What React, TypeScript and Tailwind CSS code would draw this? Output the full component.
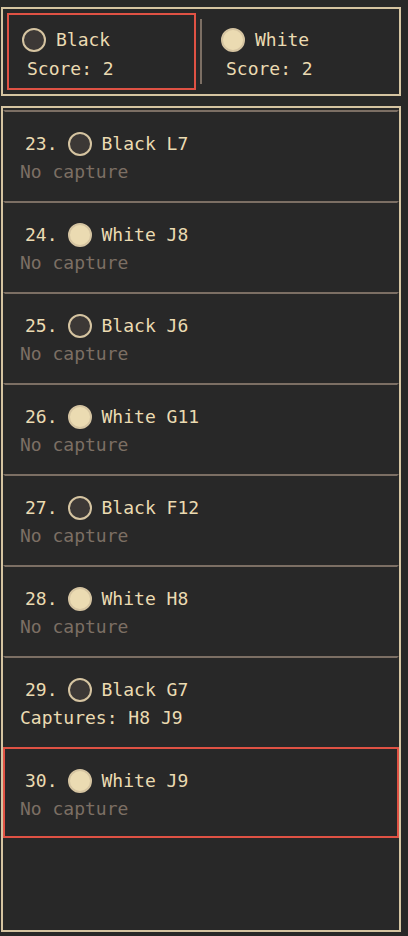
type Player = "Black" | "White";

interface Move {
  number: number;
  player: Player;
  point: string;
  captures: string[];
}

const MOVES: Move[] = [
  { number: 23, player: "Black", point: "L7", captures: [] },
  { number: 24, player: "White", point: "J8", captures: [] },
  { number: 25, player: "Black", point: "J6", captures: [] },
  { number: 26, player: "White", point: "G11", captures: [] },
  { number: 27, player: "Black", point: "F12", captures: [] },
  { number: 28, player: "White", point: "H8", captures: [] },
  { number: 29, player: "Black", point: "G7", captures: ["H8", "J9"] },
  { number: 30, player: "White", point: "J9", captures: [] },
];

const CURRENT_MOVE = 30;

function Stone({ player }: { player: Player }) {
  const fill = player === "Black" ? "bg-[#3c3836]" : "bg-[#ebdbb2]";
  return <span className={`size-6 shrink-0 rounded-full border-2 border-[#d5c4a1] ${fill}`} />;
}

function PlayerCard({ player, score, active }: { player: Player; score: number; active: boolean }) {
  return (
    <div
      className={`flex flex-1 flex-col gap-px border-2 pt-[11px] pb-[5px] ${
        active ? "border-[#e05244]" : "border-transparent"
      }`}
    >
      <div className="flex items-center gap-2.5 pl-[13px]">
        <Stone player={player} />
        <span>{player}</span>
      </div>
      <p className="pl-[18px]">Score: {score}</p>
    </div>
  );
}

function MoveRow({ move, current }: { move: Move; current: boolean }) {
  const captured = move.captures.length > 0;
  return (
    <li>
      <button
        type="button"
        className={`block w-full border-2 px-[15px] pt-[18px] pb-[13px] text-left ${
          current ? "border-[#e05244]" : "border-transparent border-t-[#7c6f64]"
        }`}
      >
        <span className="flex items-center gap-2.5 pl-[5px]">
          <span>{move.number}.</span>
          <Stone player={move.player} />
          <span>
            {move.player} {move.point}
          </span>
        </span>
        <span className={`block ${captured ? "" : "text-[#7c6f64]"}`}>
          {captured ? `Captures: ${move.captures.join(" ")}` : "No capture"}
        </span>
      </button>
    </li>
  );
}

export default function App() {
  return (
    <main className="flex min-h-screen flex-col gap-2.5 bg-[#282828] pt-[7px] pr-[7px] pb-1 pl-px font-['DejaVu_Sans_Mono',monospace] text-[18px] leading-7 text-[#ebdbb2]">
      <header className="flex gap-1 border-2 border-[#d5c4a1] p-1">
        <PlayerCard player="Black" score={2} active />
        <div className="my-1.5 w-0.5 bg-[#7c6f64]" />
        <PlayerCard player="White" score={2} active={false} />
      </header>
      <ol className="flex-1 border-2 border-[#d5c4a1] pt-0.5">
        {MOVES.map((move) => (
          <MoveRow key={move.number} move={move} current={move.number === CURRENT_MOVE} />
        ))}
      </ol>
    </main>
  );
}
